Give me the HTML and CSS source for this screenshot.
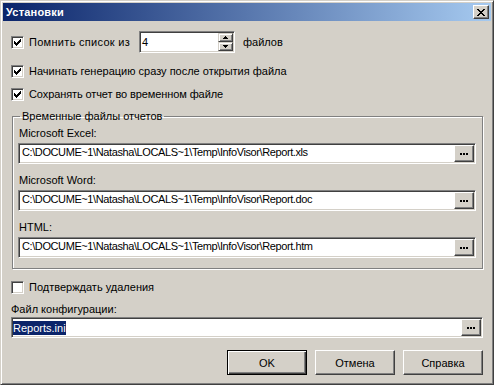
FILE: index.html
```html
<!DOCTYPE html>
<html lang="ru">
<head>
  <meta charset="UTF-8">
  <title>Установки</title>
  <link rel="stylesheet" href="styles.css">
</head>
<body>
  <div class="window">
    <!-- Caption -->
    <div class="titlebar">
      <span class="title">Установки</span>
      <span class="close-btn">
        <svg width="8" height="7" viewBox="0 0 8 7"><path d="M0 0h2v1H0zM6 0h2v1H6zM1 1h2v1H1zM5 1h2v1H5zM2 2h4v1H2zM3 3h2v1H3zM2 4h4v1H2zM1 5h2v1H1zM5 5h2v1H5zM0 6h2v1H0zM6 6h2v1H6z" fill="#000"/></svg>
      </span>
    </div>

    <div class="content">
      <div class="row-count">
        <label class="check-item count-check">
          <span class="checkbox"><svg width="11" height="11" viewBox="1 1 11 11"><path d="M3 5h1v3H3zM4 6h1v3H4zM5 7h1v3H5zM6 6h1v3H6zM7 5h1v3H7zM8 4h1v3H8zM9 3h1v3H9z" fill="#000"/></svg></span>
          Помнить список из
        </label>
        <div class="spin">
          <span class="spin-value">4</span>
          <span class="spin-buttons">
            <span class="spin-btn"><svg width="5" height="3" viewBox="0 0 5 3"><path d="M2 0h1v1H2zM1 1h3v1H1zM0 2h5v1H0z" fill="#000"/></svg></span>
            <span class="spin-btn"><svg width="5" height="3" viewBox="0 0 5 3"><path d="M0 0h5v1H0zM1 1h3v1H1zM2 2h1v1H2z" fill="#000"/></svg></span>
          </span>
        </div>
        <span class="spin-unit">файлов</span>
      </div>

      <label class="check-item check-row gen-row">
        <span class="checkbox"><svg width="11" height="11" viewBox="1 1 11 11"><path d="M3 5h1v3H3zM4 6h1v3H4zM5 7h1v3H5zM6 6h1v3H6zM7 5h1v3H7zM8 4h1v3H8zM9 3h1v3H9z" fill="#000"/></svg></span>
        Начинать генерацию сразу после открытия файла
      </label>

      <label class="check-item check-row save-row">
        <span class="checkbox"><svg width="11" height="11" viewBox="1 1 11 11"><path d="M3 5h1v3H3zM4 6h1v3H4zM5 7h1v3H5zM6 6h1v3H6zM7 5h1v3H7zM8 4h1v3H8zM9 3h1v3H9z" fill="#000"/></svg></span>
        Сохранять отчет во временном файле
      </label>

      <fieldset class="group">
        <legend>Временные файлы отчетов</legend>

        <div class="field-label">Microsoft Excel:</div>
        <div class="path-edit">
          <span class="path-text">C:\DOCUME~1\Natasha\LOCALS~1\Temp\InfoVisor\Report.xls</span>
          <span class="browse-btn"><svg width="8" height="2" viewBox="0 0 8 2"><path d="M0 0h2v2H0zM3 0h2v2H3zM6 0h2v2H6z" fill="#000"/></svg></span>
        </div>

        <div class="field-label">Microsoft Word:</div>
        <div class="path-edit">
          <span class="path-text">C:\DOCUME~1\Natasha\LOCALS~1\Temp\InfoVisor\Report.doc</span>
          <span class="browse-btn"><svg width="8" height="2" viewBox="0 0 8 2"><path d="M0 0h2v2H0zM3 0h2v2H3zM6 0h2v2H6z" fill="#000"/></svg></span>
        </div>

        <div class="field-label">HTML:</div>
        <div class="path-edit">
          <span class="path-text">C:\DOCUME~1\Natasha\LOCALS~1\Temp\InfoVisor\Report.htm</span>
          <span class="browse-btn"><svg width="8" height="2" viewBox="0 0 8 2"><path d="M0 0h2v2H0zM3 0h2v2H3zM6 0h2v2H6z" fill="#000"/></svg></span>
        </div>
      </fieldset>

      <label class="check-item check-row confirm-row">
        <span class="checkbox"></span>
        Подтверждать удаления
      </label>

      <div class="config-label">Файл конфигурации:</div>
      <div class="path-edit config-edit">
        <span class="path-text"><span class="selected">Reports.ini</span></span>
        <span class="browse-btn"><svg width="8" height="2" viewBox="0 0 8 2"><path d="M0 0h2v2H0zM3 0h2v2H3zM6 0h2v2H6z" fill="#000"/></svg></span>
      </div>

      <div class="buttons">
        <span class="btn btn-default">OK</span>
        <span class="btn">Отмена</span>
        <span class="btn">Справка</span>
      </div>
    </div>
  </div>
</body>
</html>
```

FILE: styles.css
```css
* {
  box-sizing: border-box;
}

body {
  margin: 0;
  font-family: "Liberation Sans", Arial, sans-serif;
  font-size: 11px;
  color: #000;
  background: #d4d0c8;
}

.window {
  width: 494px;
  height: 385px;
  padding: 2px;
  background: #d4d0c8;
  border: 1px solid;
  border-color: #d4d0c8 #404040 #404040 #d4d0c8;
  box-shadow: inset 1px 1px #fff, inset -1px -1px #808080;
}

/* Caption */
.titlebar {
  height: 18px;
  display: flex;
  align-items: center;
  justify-content: space-between;
  padding: 0 2px 0 3px;
  background: linear-gradient(90deg, #0a246a 0%, #a6caf0 100%);
}

.title {
  color: #fff;
  font-weight: bold;
  line-height: 13px;
  letter-spacing: 0.2px;
}

.close-btn {
  width: 16px;
  height: 14px;
  display: flex;
  align-items: center;
  justify-content: center;
  background: #d4d0c8;
  border: 1px solid;
  border-color: #fff #404040 #404040 #fff;
  box-shadow: inset -1px -1px #808080;
}

.content {
  padding: 0 8px;
}

/* Checkboxes */
.check-item {
  display: flex;
  align-items: center;
  line-height: 13px;
  white-space: nowrap;
}

.checkbox {
  width: 13px;
  height: 13px;
  flex: none;
  margin-right: 5px;
  background: #fff;
  border: 1px solid;
  border-color: #808080 #fff #fff #808080;
  box-shadow: inset 1px 1px #404040, inset -1px -1px #d4d0c8;
}

.checkbox svg {
  display: block;
}

.check-row {
  height: 13px;
}

.gen-row {
  margin-top: 12px;
}

.save-row {
  margin-top: 10px;
  letter-spacing: -0.1px;
}

.confirm-row {
  margin-top: 12px;
}

/* Spin edit */
.row-count {
  display: flex;
  align-items: center;
  height: 22px;
  margin-top: 10px;
}

.count-check {
  width: 128px;
  flex: none;
  letter-spacing: 0.3px;
}

.spin {
  width: 96px;
  height: 22px;
  display: flex;
  background: #fff;
  border: 1px solid;
  border-color: #808080 #fff #fff #808080;
  box-shadow: inset 1px 1px #404040, inset -1px -1px #d4d0c8;
  padding: 1px;
  letter-spacing: 0;
}

.spin-value {
  flex: 1;
  padding-left: 1px;
  line-height: 18px;
}

.spin-buttons {
  width: 15px;
  display: flex;
  flex-direction: column;
}

.spin-btn {
  flex: 1;
  display: flex;
  align-items: center;
  justify-content: center;
  background: #d4d0c8;
  border: 1px solid;
  border-color: #d4d0c8 #404040 #404040 #d4d0c8;
  box-shadow: inset 1px 1px #fff, inset -1px -1px #808080;
}

.spin-btn svg {
  display: block;
}

.spin-unit {
  margin-left: 8px;
}

/* Group box */
.group {
  margin: 9px 0 0 1px;
  padding: 4px 6px 10px 5px;
  min-width: 0;
  border: 1px solid #808080;
  box-shadow: inset 1px 1px #fff, 1px 1px #fff;
}

.group legend {
  margin-left: 2px;
  padding: 0 2px;
  line-height: 13px;
}

.field-label {
  line-height: 13px;
  padding-left: 1px;
}

.field-label + .path-edit {
  margin-top: 3px;
}

.path-edit + .field-label {
  margin-top: 10px;
}

/* Edit with browse button */
.path-edit {
  height: 21px;
  display: flex;
  background: #fff;
  border: 1px solid;
  border-color: #808080 #fff #fff #808080;
  box-shadow: inset 1px 1px #404040, inset -1px -1px #d4d0c8;
  padding: 1px;
}

.path-text {
  flex: 1;
  padding-left: 2px;
  line-height: 15px;
  white-space: nowrap;
  overflow: hidden;
  letter-spacing: -0.4px;
}

.browse-btn {
  width: 20px;
  flex: none;
  display: flex;
  align-items: center;
  justify-content: center;
  background: #d4d0c8;
  border: 1px solid;
  border-color: #fff #404040 #404040 #fff;
  box-shadow: inset -1px -1px #808080;
}

.browse-btn svg {
  display: block;
}

.config-label {
  margin-top: 9px;
  line-height: 13px;
}

.config-edit {
  margin-top: 1px;
}

.config-edit .path-text {
  padding-left: 0;
  display: flex;
  align-items: center;
  letter-spacing: 0;
}

.selected {
  display: block;
  background: #0a246a;
  color: #fff;
  line-height: 14px;
}

/* Dialog buttons */
.buttons {
  display: flex;
  justify-content: flex-end;
  gap: 8px;
  margin-top: 12px;
}

.btn {
  width: 80px;
  height: 25px;
  display: flex;
  align-items: center;
  justify-content: center;
  background: #d4d0c8;
  border: 1px solid;
  border-color: #fff #404040 #404040 #fff;
  box-shadow: inset -1px -1px #808080;
}

.btn-default {
  border-color: #000;
  box-shadow: inset 1px 1px #fff, inset -1px -1px #404040, inset -2px -2px #808080;
}
```
